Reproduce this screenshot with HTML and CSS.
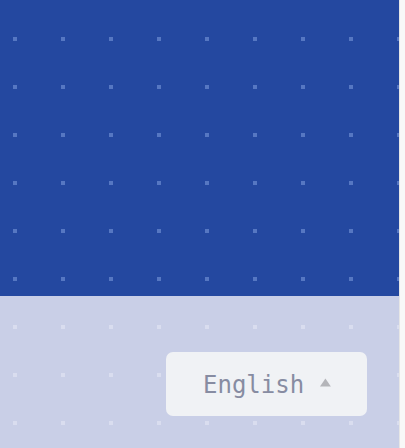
FILE: index.html
```html
<!DOCTYPE html>
<html lang="en">
<head>
<meta charset="utf-8">
<title>Language</title>
<link rel="stylesheet" href="styles.css">
</head>
<body>
<div class="page">
  <main class="main">
    <section class="hero"></section>
    <footer class="footer">
      <button class="lang" type="button">
        <span class="lang-label">English</span>
        <svg class="caret" width="12" height="9" viewBox="0 0 12 9" aria-hidden="true"><path d="M6 0 L12 9 L0 9 Z" fill="#b4b5b9"/></svg>
      </button>
    </footer>
  </main>
  <div class="scrollbar"></div>
</div>
</body>
</html>
```
FILE: styles.css
```css
html, body {
  margin: 0;
  padding: 0;
}
body {
  width: 405px;
  height: 448px;
  overflow: hidden;
  font-family: "DejaVu Sans Mono", "Liberation Mono", monospace;
}
.page {
  display: flex;
  height: 448px;
}
.main {
  flex: 1;
  display: flex;
  flex-direction: column;
}
.hero {
  height: 296px;
  background-color: #2448a0;
  background-image: conic-gradient(at 4px 4px, transparent 75%, #5677c2 75%);
  background-size: 48px 48px;
  background-position: 13px 37px;
}
.footer {
  flex: 1;
  display: flex;
  justify-content: flex-end;
  align-items: flex-start;
  padding: 56px 32px 0 0;
  background-color: #c9cfe7;
  background-image: conic-gradient(at 4px 4px, transparent 75%, #d9ddef 75%);
  background-size: 48px 48px;
  background-position: 13px 29px;
}
.lang {
  display: flex;
  align-items: center;
  gap: 16px;
  width: 201px;
  height: 64px;
  padding: 0 36px 0 37px;
  border: 0;
  border-radius: 7px;
  background: #f0f2f5;
  color: #878ca2;
  font-family: "DejaVu Sans Mono", "Liberation Mono", monospace;
  font-size: 24px;
  line-height: 1;
  cursor: pointer;
}
.lang-label {
  display: block;
  padding-top: 1px;
}
.caret {
  display: block;
  margin-top: -3px;
}
.scrollbar {
  width: 5px;
  background: #f8f8f8;
  border-left: 1px solid #e6e6e6;
}
```
